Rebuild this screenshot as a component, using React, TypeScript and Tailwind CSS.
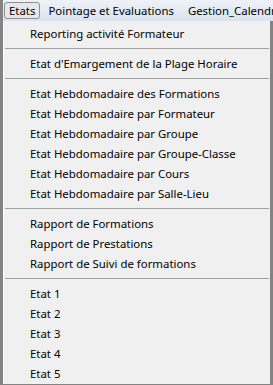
import React from 'react';

const groups: string[][] = [
    ['Reporting activité Formateur'],
    ["Etat d'Emargement de la Plage Horaire"],
    [
        'Etat Hebdomadaire des Formations',
        'Etat Hebdomadaire par Formateur',
        'Etat Hebdomadaire par Groupe',
        'Etat Hebdomadaire par Groupe-Classe',
        'Etat Hebdomadaire par Cours',
        'Etat Hebdomadaire par Salle-Lieu',
    ],
    ['Rapport de Formations', 'Rapport de Prestations', 'Rapport de Suivi de formations'],
    ['Etat 1', 'Etat 2', 'Etat 3', 'Etat 4', 'Etat 5'],
];

const App = () => {
    return (
        <div
            className="w-[273px] h-[385px] overflow-hidden bg-[#838383] flex flex-col text-[11.4px] text-black"
            style={{fontFamily: '"Noto Sans", "Open Sans", sans-serif'}}
        >
            {/*menubar*/}
            <div className="h-[21px] shrink-0 flex items-center whitespace-nowrap overflow-hidden pl-[1px] bg-gradient-to-b from-[#eef2f8] to-[#dbe3ee] border-l-[3px] border-[#838383]">
                <div className="h-[17px] px-[4px] flex items-center rounded-[3px] border border-[#8e8f8f] bg-[#e6e8eb] leading-none">
                    Etats
                </div>
                <div className="pl-[8px] pr-[14px] leading-none">Pointage et Evaluations</div>
                <div className="leading-none">Gestion_Calendrier</div>
            </div>

            {/*menu*/}
            <div className="flex-1 mx-[3px] mb-[3px] bg-[#f0f0f0] border-l border-white pt-[3px]">
                {groups.map((g, gi) => (
                    <div key={gi}>
                        {gi > 0 && (
                            <div className="h-[10px] flex items-center px-[1px]">
                                <div className="w-full h-[2px] border-t border-[#a0a0a0] border-b-white"/>
                            </div>
                        )}
                        {g.map((item) => (
                            <div key={item} className="h-[20px] flex items-center pl-[26px] whitespace-nowrap leading-none">
                                {item}
                            </div>
                        ))}
                    </div>
                ))}
            </div>
        </div>
    );
};

export default App;
